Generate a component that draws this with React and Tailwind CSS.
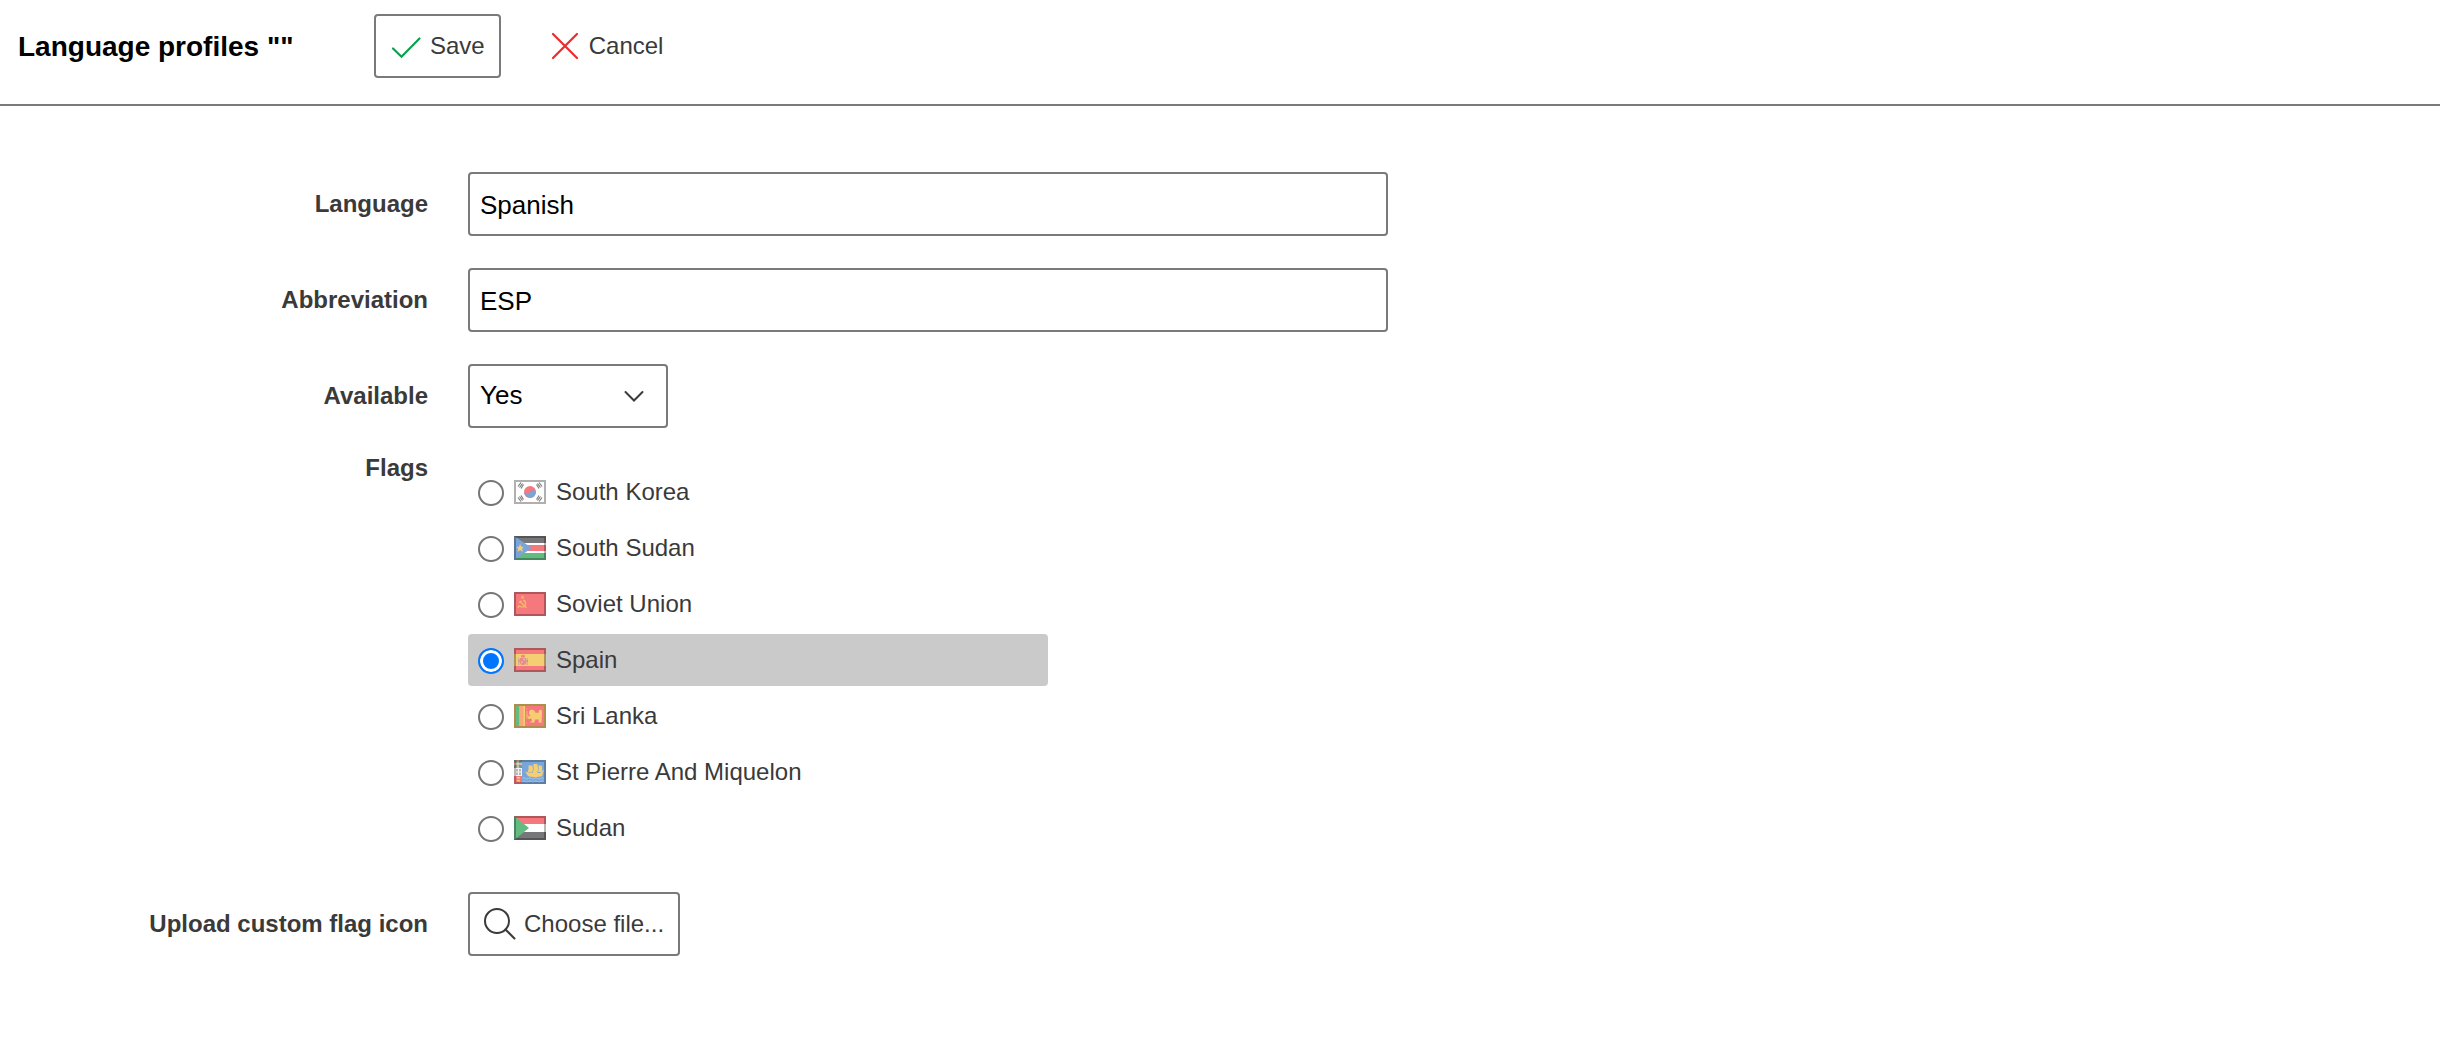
import { useRef, useState } from "react"

const FLAGS = [
  { id: "kr", name: "South Korea", Icon: SouthKoreaFlag },
  { id: "ss", name: "South Sudan", Icon: SouthSudanFlag },
  { id: "su", name: "Soviet Union", Icon: SovietUnionFlag },
  { id: "es", name: "Spain", Icon: SpainFlag },
  { id: "lk", name: "Sri Lanka", Icon: SriLankaFlag },
  { id: "pm", name: "St Pierre And Miquelon", Icon: StPierreFlag },
  { id: "sd", name: "Sudan", Icon: SudanFlag },
]

export default function App() {
  const [language, setLanguage] = useState("Spanish")
  const [abbreviation, setAbbreviation] = useState("ESP")
  const [available, setAvailable] = useState("yes")
  const [flag, setFlag] = useState("es")
  const fileRef = useRef(null)

  return (
    <form
      className="bg-white font-['Liberation_Sans',Arial,sans-serif] text-2xl text-[#3a3a3a]"
      onSubmit={(e) => e.preventDefault()}
    >
      {/* Toolbar */}
      <header className="flex items-start border-b-2 border-[#7a7a7a] px-[18px] pt-3.5 pb-[26px]">
        <h1 className="w-[356px] shrink-0 text-[28px] leading-[66px] font-bold text-black h-16">Language profiles ""</h1>
        <div className="flex gap-8">
          <button
            type="submit"
            className="flex h-16 items-center gap-2 rounded border-2 border-[#7a7a7a] px-3.5 hover:bg-gray-100"
          >
            <CheckIcon />
            Save
          </button>
          <button
            type="button"
            className="flex h-16 items-center gap-2 rounded border-2 border-transparent px-3.5 hover:bg-gray-100"
          >
            <CrossIcon />
            Cancel
          </button>
        </div>
      </header>

      <main className="flex flex-col gap-8 pt-[66px] pb-20">
        <Row label="Language" htmlFor="language">
          <TextInput id="language" value={language} onChange={setLanguage} />
        </Row>

        <Row label="Abbreviation" htmlFor="abbreviation">
          <TextInput id="abbreviation" value={abbreviation} onChange={setAbbreviation} />
        </Row>

        <Row label="Available" htmlFor="available">
          <div className="relative w-[200px]">
            <select
              id="available"
              value={available}
              onChange={(e) => setAvailable(e.target.value)}
              className="h-16 w-full appearance-none rounded border-2 border-[#7a7a7a] bg-white px-2.5 pb-0.5 text-[26px] text-black"
            >
              <option value="yes">Yes</option>
              <option value="no">No</option>
            </select>
            <ChevronIcon />
          </div>
        </Row>

        {/* Flag list */}
        <div className="-mt-1 flex gap-10 pb-1.5">
          <span id="flags-label" className="w-[428px] shrink-0 text-right leading-6 font-bold">
            Flags
          </span>
          <div
            role="radiogroup"
            aria-labelledby="flags-label"
            className="flex max-w-[580px] flex-1 flex-col gap-1 pt-2.5"
          >
            {FLAGS.map(({ id, name, Icon }) => (
              <label
                key={id}
                className="flex h-[52px] items-center rounded px-2.5 has-checked:bg-[#cacaca]"
              >
                <input
                  type="radio"
                  name="flag"
                  value={id}
                  checked={flag === id}
                  onChange={() => setFlag(id)}
                  className="mt-0.5 mr-2.5 size-[26px] appearance-none rounded-full border-2 border-[#767676] bg-white checked:border-[#0075ff] checked:bg-[#0075ff] checked:shadow-[inset_0_0_0_3px_white]"
                />
                <Icon />
                <span className="ml-2.5">{name}</span>
              </label>
            ))}
          </div>
        </div>

        <Row label="Upload custom flag icon" htmlFor="flag-icon-button">
          <button
            id="flag-icon-button"
            type="button"
            onClick={() => fileRef.current.click()}
            className="flex h-16 items-center gap-2 rounded border-2 border-[#7a7a7a] px-3.5 hover:bg-gray-100"
          >
            <SearchIcon />
            Choose file...
          </button>
          <input ref={fileRef} type="file" accept="image/*" aria-label="Flag icon file" className="hidden" />
        </Row>
      </main>
    </form>
  )
}

function Row({ label, htmlFor, children }) {
  return (
    <div className="flex items-center gap-10">
      <label htmlFor={htmlFor} className="w-[428px] shrink-0 text-right font-bold">
        {label}
      </label>
      {children}
    </div>
  )
}

function TextInput({ id, value, onChange }) {
  return (
    <input
      id={id}
      type="text"
      value={value}
      onChange={(e) => onChange(e.target.value)}
      className="h-16 max-w-[920px] min-w-0 flex-1 rounded border-2 border-[#7a7a7a] bg-white px-2.5 pt-0.5 text-[26px] text-black"
    />
  )
}

// Icons

function CheckIcon() {
  return (
    <svg className="h-8 w-8" viewBox="0 0 32 32" fill="none" stroke="#0aa14c" strokeWidth="2.2" strokeLinecap="round">
      <path d="M3 18.5 L11.5 26.8 L29.5 8.5" />
    </svg>
  )
}

function CrossIcon() {
  return (
    <svg className="h-8 w-8" viewBox="0 0 32 32" fill="none" stroke="#ee2a2a" strokeWidth="2.2" strokeLinecap="round">
      <path d="M4 4 L28 28 M28 4 L4 28" />
    </svg>
  )
}

function SearchIcon() {
  return (
    <svg className="h-8 w-8" viewBox="0 0 32 32" fill="none" stroke="#3a3a3a" strokeWidth="2" strokeLinecap="round">
      <circle cx="13" cy="13" r="12" />
      <path d="M21.5 21.5 L30.5 30.5" />
    </svg>
  )
}

function ChevronIcon() {
  return (
    <svg
      className="pointer-events-none absolute top-4 right-[18px] h-8 w-8"
      viewBox="0 0 32 32"
      fill="none"
      stroke="#3a3a3a"
      strokeWidth="2"
      strokeLinecap="round"
    >
      <path d="M7.5 12 L16 20.5 L24.5 12" />
    </svg>
  )
}

// Flags

function Flag({ edge = "#000000", edgeOpacity = 0.28, children }) {
  return (
    <svg className="h-6 w-8" viewBox="0 0 32 24" aria-hidden="true">
      {children}
      <rect x="1" y="1" width="30" height="22" fill="none" stroke={edge} strokeWidth="2" strokeOpacity={edgeOpacity} />
    </svg>
  )
}

function SouthKoreaFlag() {
  return (
    <Flag edge="#b0b0b0" edgeOpacity={1}>
      <rect width="32" height="24" fill="#fff" />
      <circle cx="16" cy="12" r="6" fill="#f5787d" />
      <path d="M10 11.5 C11 14.5 14.5 14 16 12 C17.5 10 21 9.5 22 12 A6 6 0 0 1 10 11.5Z" fill="#7ba4d9" />
      <g stroke="#777777" strokeWidth="1.1">
        <path d="M4 6.5 L7 2.5 M5.5 7.5 L8.5 3.5 M7 8.5 L9.5 4.5" />
        <path d="M28 6.5 L25 2.5 M26.5 7.5 L23.5 3.5 M25 8.5 L22.5 4.5" />
        <path d="M4 17.5 L7 21.5 M5.5 16.5 L8.5 20.5 M7 15.5 L9.5 19.5" />
        <path d="M28 17.5 L25 21.5 M26.5 16.5 L23.5 20.5 M25 15.5 L22.5 19.5" />
      </g>
    </Flag>
  )
}

function SouthSudanFlag() {
  return (
    <Flag>
      <rect width="32" height="24" fill="#fff" />
      <rect width="32" height="7" fill="#777779" />
      <rect y="9" width="32" height="6" fill="#f5787d" />
      <rect y="17" width="32" height="7" fill="#63bb82" />
      <path d="M0 0 L18 12 L0 24Z" fill="#7ba4d9" />
      <path d="M6 8 L7.3 10.7 L10 11 L8 12.8 L9 15.8 L6.2 14.2 L3.4 15.8 L4.2 12.8 L2.4 11 L5 10.7Z" fill="#f5cd73" />
    </Flag>
  )
}

function SovietUnionFlag() {
  return (
    <Flag>
      <rect width="32" height="24" fill="#f5787d" />
      <path d="M8.5 3 L9.1 4.5 L10.5 4.6 L9.5 5.6 L9.8 7 L8.5 6.3 L7.2 7 L7.5 5.6 L6.5 4.6 L7.9 4.5Z" fill="#f5b76a" />
      <path d="M9 8.2 C12.5 9 12.5 14 9 14.8 C7.5 15.1 6 14.6 5 14 L4 15.8 M5 10.5 L7.5 8.8 M6.3 9.8 L12.5 16" fill="none" stroke="#f5b76a" strokeWidth="1.4" />
    </Flag>
  )
}

function SpainFlag() {
  return (
    <Flag>
      <rect width="32" height="24" fill="#f5787d" />
      <rect y="6" width="32" height="12" fill="#f5cd73" />
      <path d="M6 10 h6 v4.5 a3 2.5 0 0 1 -6 0Z" fill="#ee8a80" />
      <path d="M7 9.5 V7.5 L9 6.8 L11 7.5 V9.5Z" fill="#e88f76" />
      <path d="M4.8 10 V17 M13.2 10 V17" stroke="#c9a9a6" strokeWidth="1.2" />
      <path d="M4 13 h2 M12 13 h2" stroke="#e07c7c" strokeWidth="1" />
      <path d="M9.2 10.5 h1.8 v2 h-1.8Z M7 13.5 h1.8 v1.5 h-1.8Z" fill="#c7bcc9" />
    </Flag>
  )
}

function SriLankaFlag() {
  return (
    <Flag edge="#b08d4a" edgeOpacity={1}>
      <rect width="32" height="24" fill="#f5cd73" />
      <rect x="2" y="2" width="3.5" height="20" fill="#63bb82" />
      <rect x="5.5" y="2" width="4" height="20" fill="#f9a878" />
      <rect x="11" y="2" width="19" height="20" fill="#f5787d" />
      <path d="M15 7.5 L17 5.5 L20.5 6.5 L21 8.5 L24.5 9 L25 6 L27.5 6 L28 8 L27.5 18.5 H24.5 L24.8 15.5 L21 15.5 L20.5 18.5 H16 L18 16.5 L17.3 14.5 L14 15 L14.2 12.5 L16.5 11.8 L15 10Z" fill="#f5cd73" />
      <path d="M13 7 V15 M12 12 h3 M12 4.5 l1 1 M28 4.5 l-1 1 M12 19.5 l1 -1 M28 19.5 l-1 -1" stroke="#f5b76a" strokeWidth="1" />
    </Flag>
  )
}

function StPierreFlag() {
  return (
    <Flag edgeOpacity={0.24}>
      <rect width="32" height="24" fill="#78a6da" />
      <rect width="8" height="8" fill="#d9848a" />
      <path d="M0 0 L8 8 M8 0 L0 8" stroke="#63a67c" strokeWidth="1.8" />
      <path d="M4 0 V8 M0 4 H8" stroke="#f3dcdc" strokeWidth="1" />
      <rect y="8" width="8" height="8" fill="#f3f3f3" />
      <path d="M3 9 v2.4 M6 9 v2.4 M3 12.6 v2.4 M6 12.6 v2.4" stroke="#8f8f91" strokeWidth="1.2" />
      <rect y="16" width="8" height="8" fill="#f5787d" />
      <path d="M3 17.5 L6 18 M3 20.5 L6 21" stroke="#f5cd73" strokeWidth="1.4" />
      <path d="M8.5 18.5 q1.5 -1.5 3 0 t3 0 t3 0 t3 0 t3 0 t3 0 t3 0 M8.5 21.5 q1.5 -1.5 3 0 t3 0 t3 0 t3 0 t3 0 t3 0 t3 0" fill="none" stroke="#a9c8ea" strokeWidth="1" />
      <path d="M11 11.5 L15 13 H26 L30 9.5 L28 16 C25 17.5 17 17.5 14 16Z" fill="#f5cd73" />
      <path d="M14.5 5.5 h3.8 q1.5 3.5 0 7 h-5 q2 -3.5 1.2 -7Z M19.3 4 h4 q1.5 4.5 0 9 h-4.6 q1.6 -4.5 0.6 -9Z M24.3 5.5 h3.2 q1.4 3 0 6.5 h-3.6 q1.4 -3 0.4 -6.5Z" fill="#f5cd73" />
    </Flag>
  )
}

function SudanFlag() {
  return (
    <Flag>
      <rect width="32" height="24" fill="#fff" />
      <rect width="32" height="8" fill="#f5787d" />
      <rect y="16" width="32" height="8" fill="#777779" />
      <path d="M0 0 L15 12 L0 24Z" fill="#63bb82" />
    </Flag>
  )
}
